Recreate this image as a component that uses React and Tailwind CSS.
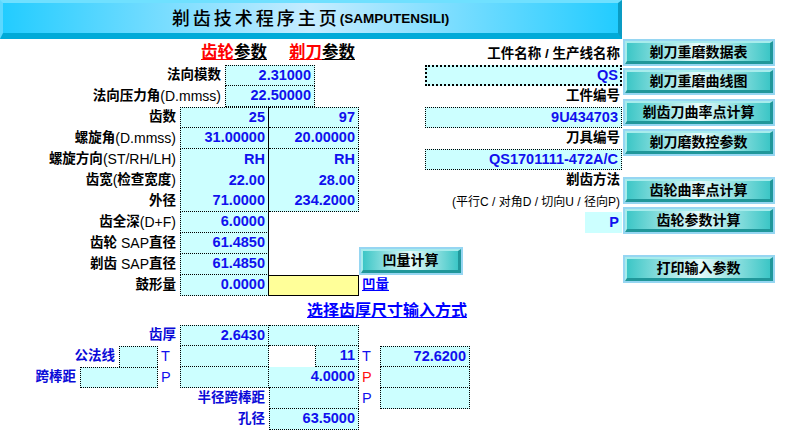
import React from "react";

// Excel-like sheet: fixed column widths and 21px rows
const cols =
  "grid-cols-[80px_39px_39px_22px_45px_44px_46px_44px_21px_45px_45px_115px_38px]";
const rows = "grid-rows-[26px_repeat(11,21px)_29px_repeat(5,21px)]";

const Label = ({ pos, blue, children }) => (
  <div
    className={`${pos} flex items-center justify-end pr-[4px] whitespace-nowrap text-[13.5px] font-bold ${
      blue ? "text-[#0a0ad8]" : "text-black"
    }`}
  >
    {children}
  </div>
);

const Val = ({ pos, b = "", bg = "bg-[#ccffff]", children }) => (
  <div
    className={`${pos} ${bg} ${b} border-dotted border-black flex items-center justify-end pr-[3px] text-[14.5px] font-bold text-[#1010ee] whitespace-nowrap overflow-hidden`}
  >
    {children}
  </div>
);

const Letter = ({ pos, red, children }) => (
  <div
    className={`${pos} flex items-center pl-[3px] text-[14.5px] ${red ? "text-[#ff1010]" : "text-[#1010ee]"}`}
  >
    {children}
  </div>
);

const Btn = ({ className = "", children }) => (
  <div className={`${className} border-2 border-[#96d6f2]`}>
    <div className="h-full flex items-center justify-center border-t-2 border-l-2 border-t-[#a8ecec] border-l-[#a8ecec] border-b-[3px] border-r-[3px] border-b-[#20979a] border-r-[#20979a] bg-[linear-gradient(90deg,#3cc6c6_0%,#e8fbfb_50%,#3cc6c6_100%)] text-[14px] font-bold text-black whitespace-nowrap">
      {children}
    </div>
  </div>
);

// latin parts of the labels are not bold in the sheet
const N = ({ children }) => <span className="font-normal text-[14px]">{children}</span>;

export default function App() {
  return (
    <div className="w-[792px] h-[437px] bg-white overflow-hidden flex font-['Liberation_Sans','Noto_Sans_CJK_SC',sans-serif]">
      {/* left: banner + sheet */}
      <div className="w-[623px] flex flex-col">
        <div className="h-[39px] w-[622px] border-t-[3px] border-l-[3px] border-b-[6px] border-r-[4px] border-t-[#6fe0ff] border-l-[#5cd8ff] border-b-[#00aad8] border-r-[#0a9cc4] bg-[linear-gradient(90deg,#22ccff_0%,#c6ecff_50%,#22ccff_100%)] flex items-center justify-center pt-[2px]">
          <span className="text-[18px] tracking-[3px] font-medium text-black">剃齿技术程序主页</span>
          <span className="text-[13.5px] font-bold text-black">(SAMPUTENSILI)</span>
        </div>

        <div className={`grid ${cols} ${rows}`}>
          {/* header row */}
          <div className="col-[5/7] row-[1] flex items-end justify-end pr-[2px] pb-[5px] text-[16.5px] leading-none font-bold whitespace-nowrap">
            <span className="text-[#ff0000] underline">齿轮</span>
            <span className="underline">参数</span>
          </div>
          <div className="col-[7/9] row-[1] flex items-end justify-end pr-[4px] pb-[5px] text-[16.5px] leading-none font-bold whitespace-nowrap">
            <span className="text-[#ff0000] underline">剃刀</span>
            <span className="underline">参数</span>
          </div>
          <div className="col-[10/14] row-[1] flex items-end justify-end pr-[3px] pb-[1px] text-[13.5px] font-bold whitespace-nowrap">
            工件名称 / 生产线名称
          </div>

          {/* module & pressure angle */}
          <Label pos="col-[1/6] row-[2]">法向模数</Label>
          <Val pos="col-[6/8] row-[2]" b="border">2.31000</Val>
          <Label pos="col-[1/6] row-[3]">
            法向压力角<N>(D.mmss)</N>
          </Label>
          <Val pos="col-[6/8] row-[3]" b="border-l border-r border-b">22.50000</Val>

          {/* right panel fields */}
          <div className="col-[11/14] row-[2] mr-[1px] bg-[#ccffff] border-2 border-dotted border-black flex items-center justify-end pr-[2px] text-[14.5px] font-bold text-[#1010ee]">
            QS
          </div>
          <div className="col-[10/14] row-[3] flex items-end justify-end pr-[3px] pb-[1px] text-[13.5px] font-bold">工件编号</div>
          <Val pos="col-[11/14] row-[4] mr-[1px]" b="border">9U434703</Val>
          <div className="col-[10/14] row-[5] flex items-end justify-end pr-[3px] pb-[1px] text-[13.5px] font-bold">刀具编号</div>
          <Val pos="col-[11/14] row-[6] mr-[1px]" b="border">QS1701111-472A/C</Val>
          <div className="col-[10/14] row-[7] flex items-end justify-end pr-[3px] pb-[1px] text-[13.5px] font-bold">剃齿方法</div>
          <div className="col-[10/14] row-[8] flex items-center justify-end pr-[3px] text-[12px] whitespace-nowrap">
            (平行C / 对角D / 切向U / 径向P)
          </div>
          <Val pos="col-[13/14] row-[9] mr-[1px]">P</Val>

          {/* gear / cutter table */}
          <Label pos="col-[1/5] row-[4]">齿数</Label>
          <Val pos="col-[5/7] row-[4]" b="border-t border-l border-b border-r [border-right-style:solid]">25</Val>
          <Val pos="col-[7/9] row-[4]" b="border-t border-r border-b">97</Val>

          <Label pos="col-[1/5] row-[5]">
            螺旋角<N>(D.mmss)</N>
          </Label>
          <Val pos="col-[5/7] row-[5]" b="border-l border-b border-r [border-right-style:solid]">31.00000</Val>
          <Val pos="col-[7/9] row-[5]" b="border-r border-b">20.00000</Val>

          <Label pos="col-[1/5] row-[6]">
            螺旋方向<N>(ST/RH/LH)</N>
          </Label>
          <Val pos="col-[5/7] row-[6]" b="border-l border-r [border-right-style:solid]">RH</Val>
          <Val pos="col-[7/9] row-[6]" b="border-r">RH</Val>

          <Label pos="col-[1/5] row-[7]">
            齿宽<N>(</N>检查宽度<N>)</N>
          </Label>
          <Val pos="col-[5/7] row-[7]" b="border-l border-r [border-right-style:solid]">22.00</Val>
          <Val pos="col-[7/9] row-[7]" b="border-r">28.00</Val>

          <Label pos="col-[1/5] row-[8]">外径</Label>
          <Val pos="col-[5/7] row-[8]" b="border-l border-b border-r [border-right-style:solid]">71.0000</Val>
          <Val pos="col-[7/9] row-[8]" b="border-r border-b">234.2000</Val>

          <Label pos="col-[1/5] row-[9]">
            齿全深<N>(D+F)</N>
          </Label>
          <Val pos="col-[5/7] row-[9]" b="border-l border-b border-r [border-right-style:solid]">6.0000</Val>

          <Label pos="col-[1/5] row-[10]">
            齿轮<N>&nbsp;SAP</N>直径
          </Label>
          <Val pos="col-[5/7] row-[10]" b="border-l border-b border-r [border-right-style:solid]">61.4850</Val>

          <Label pos="col-[1/5] row-[11]">
            剃齿<N>&nbsp;SAP</N>直径
          </Label>
          <Val pos="col-[5/7] row-[11]" b="border-l border-b border-r [border-right-style:solid]">61.4850</Val>

          <Label pos="col-[1/5] row-[12]">鼓形量</Label>
          <Val pos="col-[5/7] row-[12]" b="border-l border-b border-r [border-right-style:solid]">0.0000</Val>
          <div className="col-[7/9] row-[12] bg-[#ffff99] border-t border-r border-b border-solid border-black" />
          <div className="col-[9/12] row-[12] flex items-center pl-[3px] text-[13.5px] font-bold text-[#0000ff] underline">凹量</div>

          <Btn className="col-[9/12] row-[10/12] self-end justify-self-start w-[104px] h-[28px]">凹量计算</Btn>

          {/* tooth thickness section */}
          <div className="col-[7/14] row-[13] flex items-end pl-[38px] pb-[2px] text-[16px] font-bold text-[#0000ff] underline whitespace-nowrap">
            选择齿厚尺寸输入方式
          </div>

          <Label pos="col-[1/5] row-[14]" blue>齿厚</Label>
          <Val pos="col-[5/7] row-[14]" b="border-t border-l border-b border-r">2.6430</Val>
          <Val pos="col-[7/9] row-[14]" b="border-t border-r border-b" />

          <Label pos="col-[1/3] row-[15]" blue>公法线</Label>
          <Val pos="col-[3/4] row-[15]" b="border-t border-l border-r" />
          <Letter pos="col-[4/5] row-[15]">T</Letter>
          <Val pos="col-[5/7] row-[15]" b="border-l border-r border-b" />
          <Val pos="col-[8/9] row-[15]" b="border-l border-r border-b">11</Val>
          <Letter pos="col-[9/10] row-[15]">T</Letter>
          <Val pos="col-[10/12] row-[15]" b="border">72.6200</Val>

          <Label pos="col-[1/2] row-[16]" blue>跨棒距</Label>
          <Val pos="col-[2/4] row-[16]" b="border" />
          <Letter pos="col-[4/5] row-[16]">P</Letter>
          <Val pos="col-[5/7] row-[16]" b="border-l border-r border-b" />
          <Val pos="col-[7/9] row-[16]" b="border-r border-b">4.0000</Val>
          <Letter pos="col-[9/10] row-[16]" red>P</Letter>
          <Val pos="col-[10/12] row-[16]" b="border-l border-r border-b" />

          <Label pos="col-[1/7] row-[17]" blue>半径跨棒距</Label>
          <Val pos="col-[7/9] row-[17]" b="border-l border-r border-b" />
          <Letter pos="col-[9/10] row-[17]">P</Letter>
          <Val pos="col-[10/12] row-[17]" b="border-l border-r border-b" />

          <Label pos="col-[1/7] row-[18]" blue>孔径</Label>
          <Val pos="col-[7/9] row-[18]" b="border-l border-r border-b">63.5000</Val>
        </div>
      </div>

      {/* right: macro buttons */}
      <div className="w-[152px] flex flex-col pt-[39px]">
        <Btn className="h-[27px]">剃刀重磨数据表</Btn>
        <Btn className="h-[27px] mt-[2px]">剃刀重磨曲线图</Btn>
        <Btn className="h-[27px] mt-[4px]">剃齿刀曲率点计算</Btn>
        <Btn className="h-[27px] mt-[3px]">剃刀磨数控参数</Btn>
        <Btn className="h-[27px] mt-[21px]">齿轮曲率点计算</Btn>
        <Btn className="h-[27px] mt-[3px]">齿轮参数计算</Btn>
        <Btn className="h-[28px] mt-[21px]">打印输入参数</Btn>
      </div>
    </div>
  );
}
